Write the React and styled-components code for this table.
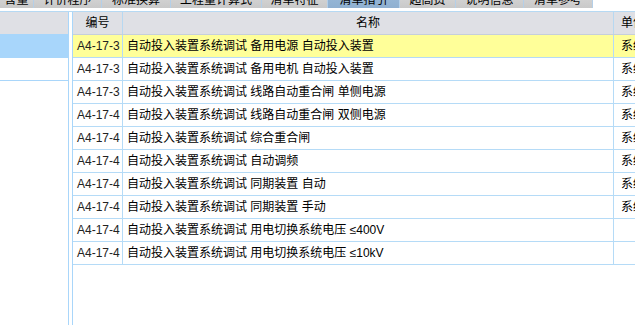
import React from "react";
import styled, { createGlobalStyle } from "styled-components";

const GlobalStyle = createGlobalStyle`
    html, body {
        margin: 0;
        padding: 0;
        background: #fff;
        overflow: hidden;
    }
    body {
        font-family: "Liberation Sans", "Noto Sans CJK SC", sans-serif;
        font-size: 12px;
        color: #000;
    }
`;

const tabs = [
    { label: "含量", width: 34 },
    { label: "计价程序", width: 68 },
    { label: "标准换算", width: 69 },
    { label: "工程量计算式", width: 91 },
    { label: "清单特征", width: 66 },
    { label: "清单指引", width: 72, active: true },
    { label: "超高费", width: 56 },
    { label: "说明信息", width: 68 },
    { label: "清单参考", width: 69 },
];

const rows = [
    { code: "A4-17-3", name: "自动投入装置系统调试 备用电源 自动投入装置", unit: "系统", current: true },
    { code: "A4-17-3", name: "自动投入装置系统调试 备用电机 自动投入装置", unit: "系统" },
    { code: "A4-17-3", name: "自动投入装置系统调试 线路自动重合闸 单侧电源", unit: "系统" },
    { code: "A4-17-4", name: "自动投入装置系统调试 线路自动重合闸 双侧电源", unit: "系统" },
    { code: "A4-17-4", name: "自动投入装置系统调试 综合重合闸", unit: "系统" },
    { code: "A4-17-4", name: "自动投入装置系统调试 自动调频", unit: "系统" },
    { code: "A4-17-4", name: "自动投入装置系统调试 同期装置 自动", unit: "系统" },
    { code: "A4-17-4", name: "自动投入装置系统调试 同期装置 手动", unit: "系统" },
    { code: "A4-17-4", name: "自动投入装置系统调试 用电切换系统电压 ≤400V", unit: "" },
    { code: "A4-17-4", name: "自动投入装置系统调试 用电切换系统电压 ≤10kV", unit: "" },
];

const App = () => {
    return (
        <>
            <GlobalStyle />
            <Page>
                <TabBar>
                    {tabs.map((t) => (
                        <Tab key={t.label} $width={t.width} $active={t.active}>
                            {t.label}
                        </Tab>
                    ))}
                </TabBar>
                <Body>
                    <LeftPanel>
                        <LeftHeader />
                        <LeftRow $selected />
                        <LeftRow />
                    </LeftPanel>
                    <Splitter />
                    <Grid>
                        <HeaderRow>
                            <HeadCell $width={50}>编号</HeadCell>
                            <HeadCell $width={491}>名称</HeadCell>
                            <HeadCell $width={60} $left>单位</HeadCell>
                        </HeaderRow>
                        {rows.map((r, i) => (
                            <Row key={i} $current={r.current}>
                                <CodeCell>{r.code}</CodeCell>
                                <NameCell>{r.name}</NameCell>
                                <UnitCell>{r.unit}</UnitCell>
                            </Row>
                        ))}
                    </Grid>
                </Body>
            </Page>
        </>
    );
};

export default App;

const Page = styled.div`
    width: 635px;
    height: 325px;
    display: flex;
    flex-direction: column;
    overflow: hidden;
`;

const TabBar = styled.div`
    display: flex;
    height: 20px;
    margin-top: -12px;
    margin-bottom: 3px;
    flex-shrink: 0;
`;

const Tab = styled.div`
    width: ${(p) => p.$width}px;
    flex-shrink: 0;
    box-sizing: border-box;
    display: flex;
    align-items: flex-end;
    justify-content: center;
    padding-bottom: 1px;
    line-height: 14px;
    white-space: nowrap;
    overflow: hidden;
    border-right: 1px solid #b4cfe8;
    background: ${(p) =>
        p.$active
            ? "linear-gradient(#9dbcda, #8fb0d1)"
            : "linear-gradient(#dcdcdc, #c9c9c9)"};
`;

const Body = styled.div`
    flex: 1;
    display: flex;
    border-top: 1px solid #b6d9f3;
    min-height: 0;
`;

const LeftPanel = styled.div`
    width: 68px;
    flex-shrink: 0;
    border-right: 1px solid #a9d6fa;
    display: flex;
    flex-direction: column;
`;

const LeftHeader = styled.div`
    height: 22px;
    background: #dfe0e5;
`;

const LeftRow = styled.div`
    height: ${(p) => (p.$selected ? 24 : 22)}px;
    background: ${(p) => (p.$selected ? "#a8d6fb" : "#fff")};
    border-bottom: ${(p) => (p.$selected ? "none" : "1px solid #a9d6fa")};
`;

const Splitter = styled.div`
    width: 3px;
    flex-shrink: 0;
    background: #fff;
`;

const Grid = styled.div`
    flex: 1;
    border-left: 1px solid #a9d6fa;
    overflow: hidden;
    display: flex;
    flex-direction: column;
`;

const HeaderRow = styled.div`
    display: flex;
    height: 23px;
    box-sizing: border-box;
    background: #dfe0e5;
    border-bottom: 1px solid #c6cfdb;
    flex-shrink: 0;
`;

const HeadCell = styled.div`
    width: ${(p) => p.$width}px;
    flex-shrink: 0;
    box-sizing: border-box;
    border-right: 1px solid #b7d8f1;
    text-align: ${(p) => (p.$left ? "left" : "center")};
    padding-left: ${(p) => (p.$left ? 7 : 0)}px;
    line-height: 22px;
    white-space: nowrap;
`;

const Row = styled.div`
    display: flex;
    height: 23px;
    box-sizing: border-box;
    border-bottom: 1px solid #b5dbf7;
    background: ${(p) => (p.$current ? "#ffff99" : "#fff")};
    flex-shrink: 0;
`;

const Cell = styled.div`
    flex-shrink: 0;
    box-sizing: border-box;
    border-right: 1px solid #b5dbf7;
    line-height: 22px;
    white-space: nowrap;
    overflow: hidden;
`;

const CodeCell = styled(Cell)`
    width: 50px;
    padding-left: 4px;
    color: #222;
`;

const NameCell = styled(Cell)`
    width: 491px;
    padding-left: 4px;
`;

const UnitCell = styled(Cell)`
    width: 60px;
    padding-left: 7px;
`;
